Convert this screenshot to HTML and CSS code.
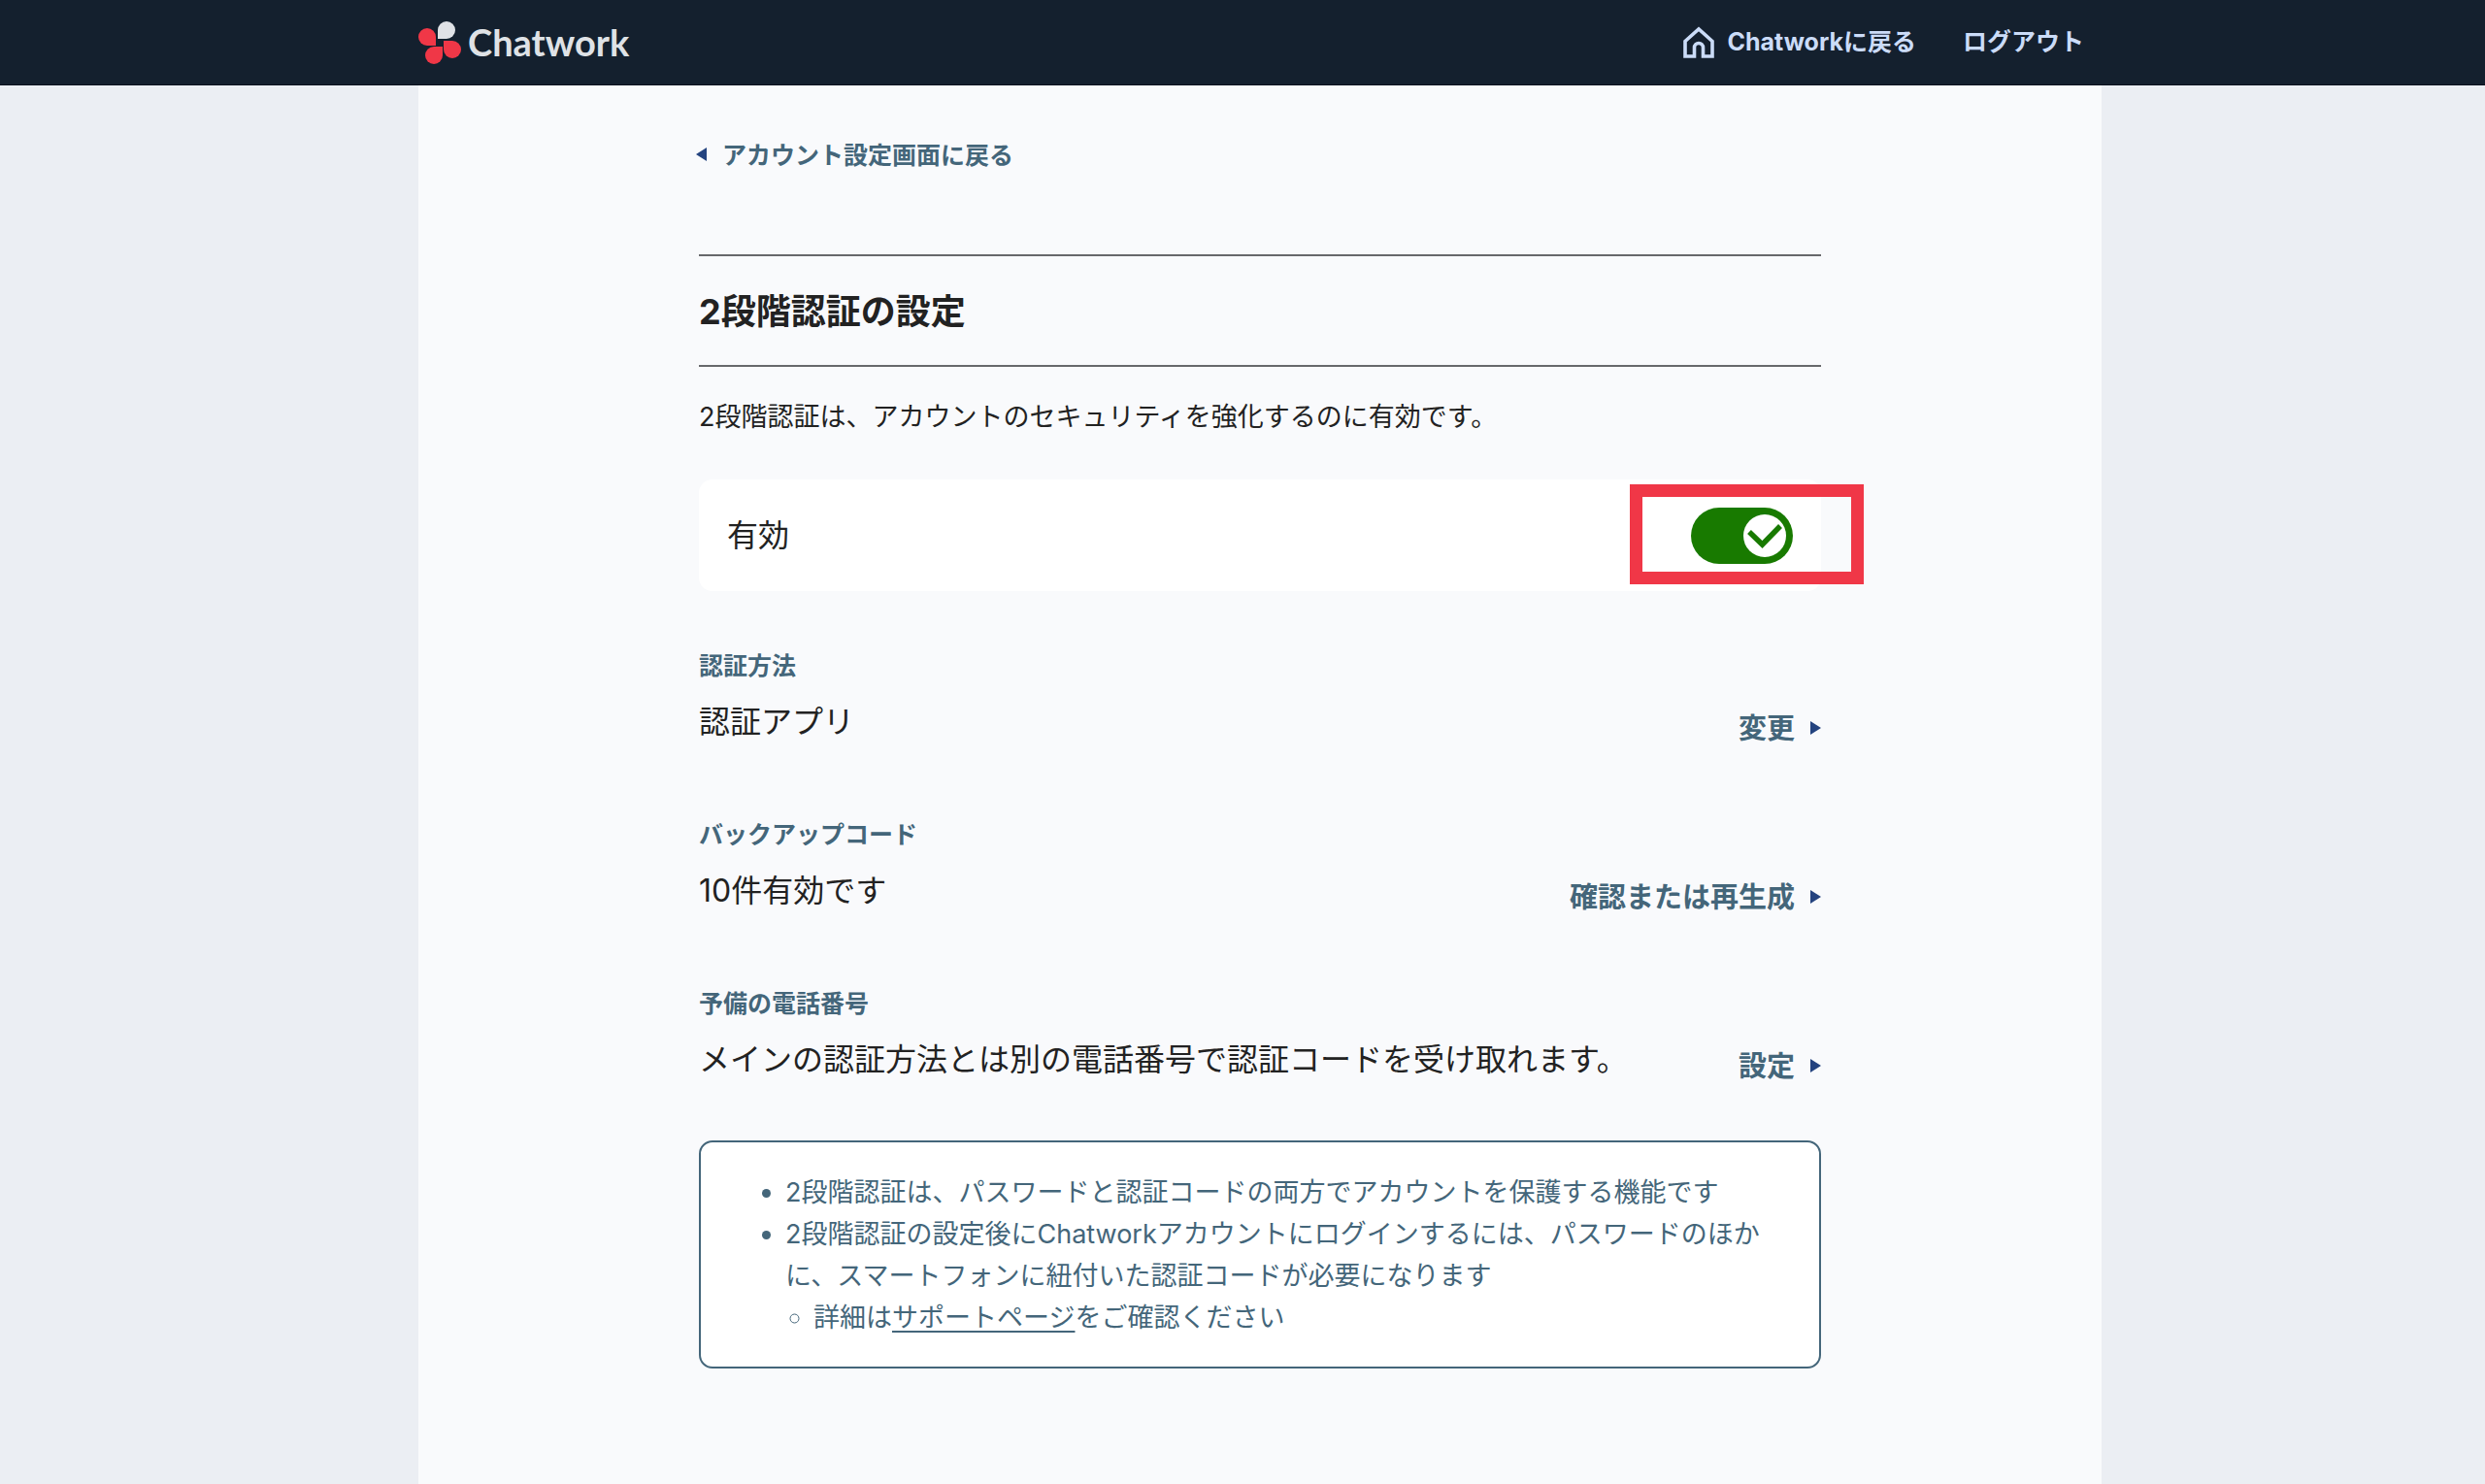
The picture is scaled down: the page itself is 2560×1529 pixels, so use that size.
FILE: index.html
```html
<!DOCTYPE html>
<html lang="ja">
<head>
<meta charset="utf-8">
<meta name="viewport" content="width=device-width, initial-scale=1">
<title>2段階認証の設定 - Chatwork</title>
<link rel="stylesheet" href="styles.css">
</head>
<body>
<header class="header">
  <div class="header-inner">
    <a class="logo" href="#">
      <svg class="logo-mark" viewBox="0 0 44 44" aria-hidden="true">
        <path fill="#dfe2e6" d="M20 18V9a9 9 0 1 1 9 9z"/>
        <path fill="#f03747" d="M18 25V16a9 9 0 1 0-9 9z"/>
        <path fill="#f03747" d="M26 20h9a9 9 0 1 1-9 9z"/>
        <path fill="#f03747" d="M25 26h-9a9 9 0 1 0 9 9z"/>
      </svg>
      <span>Chatwork</span>
    </a>
    <nav class="header-nav">
      <a class="header-link" href="#">
        <svg class="home-icon" viewBox="0 0 32 34" aria-hidden="true">
          <path fill="none" stroke="currentColor" stroke-width="3.6" d="M2 31V15.500L16 3l14 12.500V31H20.500V22a4.500 4.500 0 0 0-9 0v9z"/>
        </svg>
        <span>Chatworkに戻る</span>
      </a>
      <a class="header-link" href="#">ログアウト</a>
    </nav>
  </div>
</header>
<div class="page">
<main class="main">
  <a class="back-link" href="#">
    <svg class="arrow" viewBox="0 0 11 14" aria-hidden="true"><path d="M11 0v14L0 7z"/></svg>
    <span>アカウント設定画面に戻る</span>
  </a>
  <h1 class="title">2段階認証の設定</h1>
  <p class="lead">2段階認証は、アカウントのセキュリティを強化するのに有効です。</p>

  <div class="status">
    <label for="two-step">有効</label>
    <span class="toggle">
      <input class="toggle-input" type="checkbox" role="switch" id="two-step" checked>
      <svg class="toggle-knob" viewBox="0 0 44 44" aria-hidden="true">
        <circle cx="22" cy="22" r="22" fill="#fff"/>
        <path d="M6 18l13.500 13L38 12" fill="none" stroke="#187a00" stroke-width="5.500"/>
      </svg>
    </span>
    <span class="highlight" aria-hidden="true"></span>
  </div>

  <div class="settings">
    <section class="setting">
      <div class="setting-body">
        <h2 class="setting-name">認証方法</h2>
        <p class="setting-value">認証アプリ</p>
      </div>
      <a class="setting-action" href="#">変更
        <svg class="arrow" viewBox="0 0 11 14" aria-hidden="true"><path d="M0 0v14L11 7z"/></svg>
      </a>
    </section>
    <section class="setting">
      <div class="setting-body">
        <h2 class="setting-name">バックアップコード</h2>
        <p class="setting-value">10件有効です</p>
      </div>
      <a class="setting-action" href="#">確認または再生成
        <svg class="arrow" viewBox="0 0 11 14" aria-hidden="true"><path d="M0 0v14L11 7z"/></svg>
      </a>
    </section>
    <section class="setting">
      <div class="setting-body">
        <h2 class="setting-name">予備の電話番号</h2>
        <p class="setting-value">メインの認証方法とは別の電話番号で認証コードを受け取れます。</p>
      </div>
      <a class="setting-action" href="#">設定
        <svg class="arrow" viewBox="0 0 11 14" aria-hidden="true"><path d="M0 0v14L11 7z"/></svg>
      </a>
    </section>
  </div>

  <ul class="notes">
    <li>2段階認証は、パスワードと認証コードの両方でアカウントを保護する機能です</li>
    <li>2段階認証の設定後にChatworkアカウントにログインするには、パスワードのほかに、スマートフォンに紐付いた認証コードが必要になります
      <ul class="subnotes">
        <li>詳細は<a href="#">サポートページ</a>をご確認ください</li>
      </ul>
    </li>
  </ul>
</main>
</div>
</body>
</html>
```
FILE: styles.css
```css
* {
  box-sizing: border-box;
}

body {
  margin: 0;
  min-height: 100vh;
  display: flex;
  flex-direction: column;
  background: #ebeef3;
  color: #222;
  font-family: Inter, "Noto Sans CJK JP", sans-serif;
  font-size: 27px;
  line-height: 43px;
}

h1, h2, p, ul {
  margin: 0;
}

a {
  color: inherit;
  text-decoration: none;
}

svg {
  display: block;
  flex: none;
}

.header {
  padding-left: 36px;
  background: #14202e;
  border-bottom: 1px solid #06101c;
}

.header-inner {
  display: flex;
  align-items: center;
  justify-content: space-between;
  max-width: 1734px;
  height: 87px;
  margin: 0 auto;
  padding-right: 18px;
}

.logo {
  display: flex;
  align-items: center;
  gap: 7px;
  color: #dfe2e6;
  font-family: Lato, sans-serif;
  font-size: 38px;
  font-weight: 700;
}

.logo-mark {
  width: 44px;
  height: 44px;
}

.header-nav {
  display: flex;
  gap: 48px;
  color: #cbdcf8;
  font-size: 25px;
  font-weight: 700;
}

.header-link {
  display: flex;
  align-items: center;
  gap: 13px;
}

.home-icon {
  width: 32px;
  height: 34px;
}

.page {
  flex: 1;
  display: flex;
  padding-left: 36px;
}

.main {
  flex: 1;
  max-width: 1734px;
  margin: 0 auto;
  padding: 52px 289px 100px;
  background: #f9fafc;
}

.back-link {
  display: flex;
  align-items: center;
  gap: 16px;
  width: fit-content;
  margin: 0 0 82px -3px;
  color: #44667a;
  font-size: 25px;
  font-weight: 700;
  line-height: 40px;
}

.arrow {
  width: 11px;
  height: 14px;
  margin-bottom: 2px;
  fill: #24437f;
}

.title {
  padding: 30px 0 28px;
  border-top: 2px solid #67686b;
  border-bottom: 2px solid #67686b;
  font-size: 36px;
  font-weight: 700;
  line-height: 54px;
}

.lead {
  margin: 30px 0 43px;
}

.status {
  position: relative;
  display: flex;
  align-items: center;
  justify-content: space-between;
  height: 115px;
  padding: 0 29px;
  border-radius: 14px;
  background: #fff;
  font-size: 32px;
}

.toggle {
  display: grid;
  align-items: center;
}

.toggle-input {
  grid-area: 1 / 1;
  appearance: none;
  width: 105px;
  height: 58px;
  margin: 0;
  border-radius: 29px;
  background: #187a00;
}

.toggle-knob {
  grid-area: 1 / 1;
  justify-self: end;
  width: 44px;
  height: 44px;
  margin-right: 7px;
  pointer-events: none;
}

.highlight {
  position: absolute;
  top: 5px;
  right: -44px;
  width: 241px;
  height: 103px;
  border: 13px solid #f03747;
  pointer-events: none;
}

.settings {
  display: grid;
  gap: 71px;
  margin: 56px 0 59px;
}

.setting {
  display: flex;
  align-items: flex-end;
  justify-content: space-between;
}

.setting-name {
  margin-bottom: 13px;
  color: #44667a;
  font-size: 25px;
  font-weight: 700;
  line-height: 42px;
}

.setting-value {
  font-size: 32px;
  line-height: 48px;
}

.setting-action {
  display: flex;
  align-items: center;
  gap: 16px;
  color: #44667a;
  font-size: 29px;
  font-weight: 700;
  line-height: 34px;
}

.notes {
  padding: 30px 50px 29px 87px;
  border: 2px solid #44667a;
  border-radius: 14px;
  background: #fff;
  color: #44667a;
}

.subnotes {
  padding-left: 29px;
}

.subnotes a {
  text-decoration: underline;
  text-decoration-thickness: 2px;
  text-underline-offset: 4px;
}
```
